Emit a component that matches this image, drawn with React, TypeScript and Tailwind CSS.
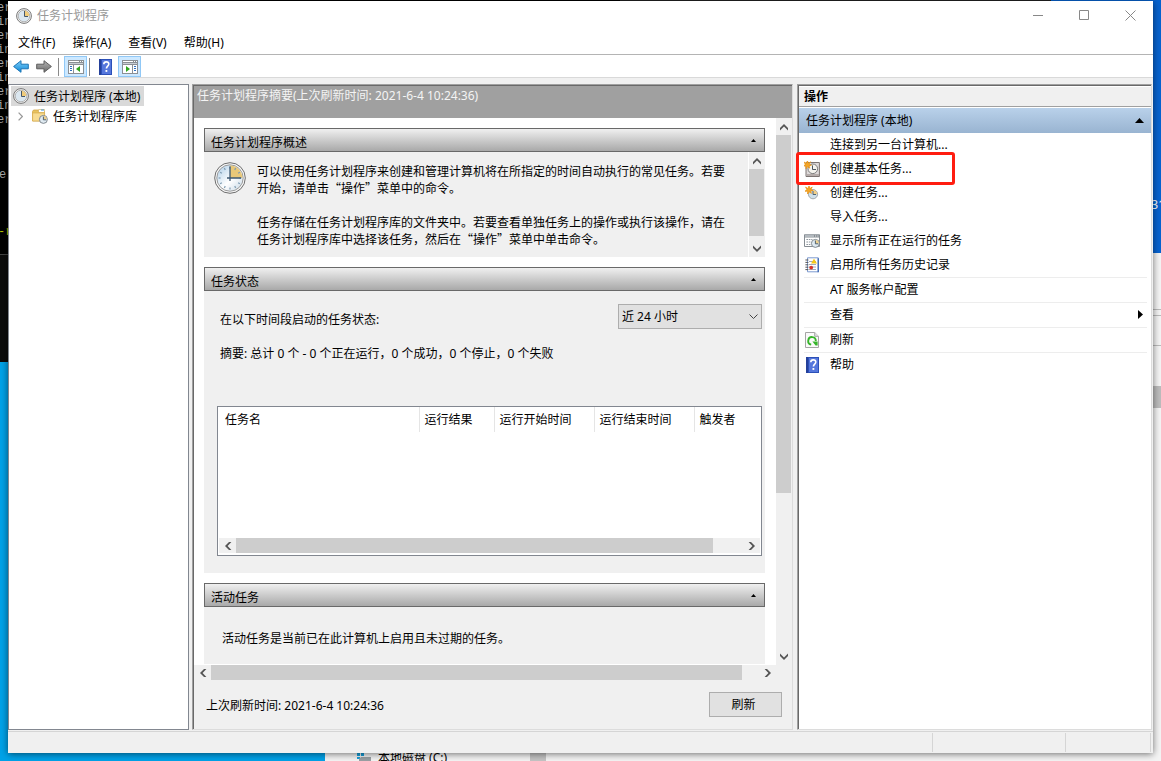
import { useId, type ReactNode } from 'react'

type IconProps = { className?: string }

function ClockIcon({ className = '' }: IconProps) {
  const id = useId()
  const ticks = Array.from({ length: 12 }, (_, i) => i * 30)
  return (
    <svg viewBox="0 0 32 32" className={`shrink-0 ${className}`} aria-hidden="true">
      <defs>
        <linearGradient id={id} x1="0" y1="0" x2="1" y2="1">
          <stop offset="0" stopColor="#a9cbe6" />
          <stop offset="0.55" stopColor="#ffffff" />
          <stop offset="1" stopColor="#c3d5e4" />
        </linearGradient>
      </defs>
      <circle cx="16" cy="16" r="15.3" fill="#f7f7f7" stroke="#6c6c6c" strokeWidth="1" />
      <circle cx="16" cy="16" r="13.2" fill={`url(#${id})`} stroke="#9b9b9b" strokeWidth="1" />
      <path d="M16 16V3.6A12.4 12.4 0 0 1 28.4 16Z" fill="#e9c878" />
      {ticks.map((a) => (
        <path key={a} d="M16 4.6v2" stroke="#7f9cb2" strokeWidth="1.2" transform={`rotate(${a} 16 16)`} />
      ))}
      <path d="M16 4.5V19M13 16H27" stroke="#3c5872" strokeWidth="1.3" fill="none" />
    </svg>
  )
}

function SmallClockIcon({ className = '' }: IconProps) {
  return (
    <svg viewBox="0 0 16 16" className={`shrink-0 ${className}`} aria-hidden="true">
      <circle cx="8" cy="8" r="7.4" fill="#f4f4f4" stroke="#777" />
      <circle cx="8" cy="8" r="5.8" fill="#dbe7f0" stroke="#a6a6a6" strokeWidth="0.8" />
      <path d="M8 8V2.6A5.4 5.4 0 0 1 13.4 8Z" fill="#f0cb7a" />
      <path d="M8.500 3V8.500H12" stroke="#46586a" fill="none" />
    </svg>
  )
}

function MiniClock({ x, y, r }: { x: number; y: number; r: number }) {
  return (
    <g>
      <circle cx={x} cy={y} r={r} fill="#dfeaf1" stroke="#777f86" strokeWidth="0.9" />
      <path d={`M${x} ${y}v${-r + 0.6}a${r - 0.6} ${r - 0.6} 0 0 1 ${r - 0.6} ${r - 0.6}z`} fill="#eed08c" />
      <path d={`M${x} ${y - r + 1.2}V${y + 0.4}H${x + r - 1.2}`} fill="none" stroke="#3f5566" strokeWidth="0.9" />
    </g>
  )
}

function Spark({ x, y }: { x: number; y: number }) {
  return (
    <path
      transform={`translate(${x} ${y})`}
      d="M0-4 1-1.4 3.2-3 1.8-.6 4 .4 1.6 1 2.4 3.4.2 1.8-1.4 4-1.4 1.2-4 1.2-2-.4-3.4-2.8-1-1.4Z"
      fill="#f5a623"
      stroke="#e8961a"
      strokeWidth="0.8"
    />
  )
}

function FolderClockIcon() {
  return (
    <svg viewBox="0 0 16 16" className="size-4 shrink-0" aria-hidden="true">
      <path d="M.5 3.5 1.5 2H6l1.2 1.5h5.3V13H.5Z" fill="#e8c25e" stroke="#d0a548" strokeWidth="0.8" />
      <path d="M6.5 1.5h6v3h-6z" fill="#fff" stroke="#d0a94a" strokeWidth="0.6" />
      <path d="M9 1.4h3v1.2H9z" fill="#5aa3dd" />
      <path d="M.6 5h12v8H.6z" fill="#f8dc92" stroke="#d5aa48" strokeWidth="0.6" />
      <MiniClock x={11.4} y={11.4} r={4} />
    </svg>
  )
}

function Arrow({ right = false }: { right?: boolean }) {
  const id = useId()
  const path = right ? 'M.7 5.2H8V1.7L15.4 7.5 8 13.3V9.8H.7Z' : 'M15.3 5.2H8V1.7L.6 7.5 8 13.3V9.8h7.3Z'
  return (
    <svg viewBox="0 0 16 15" className="h-[15px] w-4" aria-hidden="true">
      <defs>
        <linearGradient id={id} x1="0" y1="0" x2="0" y2="1">
          <stop offset="0" stopColor={right ? '#b5b5b5' : '#7fd0fa'} />
          <stop offset="1" stopColor={right ? '#6a6a6a' : '#0c86d6'} />
        </linearGradient>
      </defs>
      <path d={path} fill={`url(#${id})`} stroke={right ? '#5c5c5c' : '#1b74b5'} strokeWidth="1" />
    </svg>
  )
}

function PaneIcon({ flip = false }: { flip?: boolean }) {
  return (
    <svg viewBox="0 0 16 14" className="h-[14px] w-4" aria-hidden="true" shapeRendering="crispEdges">
      <path d="M0 0h16v14H0z" fill="#8b8f94" />
      <path d="M1 1h10v1H1zM12 1h1v1h-1zM14 1h1v1h-1z" fill="#fff" />
      <path d="M1 3h14v1H1z" fill="#c9ced4" />
      <path d="M1 5h14v8H1z" fill="#fff" />
      {flip ? (
        <>
          <path d="M10 5h1v8h-1z" fill="#8b8f94" />
          <path d="M12 6h2v1h-2zM12 8h2v1h-2zM12 10h2v1h-2z" fill="#2f6fc0" />
          <path d="M4 6v6l4-3z" fill="#2fa51c" shapeRendering="auto" />
        </>
      ) : (
        <>
          <path d="M5 5h1v8H5z" fill="#8b8f94" />
          <path d="M2 6h2v1H2zM2 8h2v1H2zM2 10h2v1H2z" fill="#2f6fc0" />
          <path d="M12 6v6L8 9z" fill="#2fa51c" shapeRendering="auto" />
        </>
      )}
    </svg>
  )
}

function HelpIcon() {
  return (
    <svg viewBox="0 0 13 16" className="h-4 w-[13px]" aria-hidden="true">
      <path d="M0 0h13v16H0z" fill="#2c50b8" />
      <path d="M3 1h9v14H3z" fill="#5577dc" />
      <path d="M0 0h2v16H0z" fill="#24409a" />
      <path
        d="M4.8 5.2C4.8 3.6 5.8 2.9 7.2 2.9s2.6.8 2.6 2.2c0 2-2.4 2-2.4 4.4"
        fill="none"
        stroke="#fff"
        strokeWidth="1.6"
      />
      <path d="M6.5 11h1.8v1.9H6.5z" fill="#fff" />
    </svg>
  )
}

function BasicTaskIcon() {
  return (
    <svg viewBox="0 0 16 16" className="size-4" aria-hidden="true">
      <path d="M2 1.5h13.4v14H2z" fill="#dedada" stroke="#7c7472" />
      <path d="M3 13h12v2H3z" fill="#b5acaa" />
      <circle cx="8.8" cy="7.8" r="4.8" fill="#f5f4ee" stroke="#7c7c7c" strokeWidth="1" />
      <path d="M8.500 4.4V8.500H12" fill="none" stroke="#4b5560" strokeWidth="1" />
      <Spark x={3.4} y={3.8} />
    </svg>
  )
}

function NewTaskIcon() {
  return (
    <svg viewBox="0 0 16 16" className="size-4" aria-hidden="true">
      <circle cx="9" cy="9.2" r="4.6" fill="#cfe0ea" stroke="#a3a9ac" strokeWidth="1" />
      <path d="M9 9.200V5A4.200 4.200 0 0 1 13.200 9.200Z" fill="#f3cf88" />
      <path d="M9 6V9.500H12" fill="none" stroke="#4f6475" />
      <Spark x={5} y={5} />
    </svg>
  )
}

function RunningIcon() {
  return (
    <svg viewBox="0 0 16 14" className="h-[14px] w-4" aria-hidden="true">
      <path d="M.5 1h15v11.5H.5z" fill="#fff" stroke="#858c92" />
      <path d="M0 .5h16v3H0z" fill="#858c92" />
      <path d="M1 2h9" stroke="#dfe5ea" />
      <path d="M11.2 2h1M13.4 2h1" stroke="#fff" />
      <path d="M2.4 5.5h6M2.4 8h5M2.4 10.5h4" stroke="#8e979e" strokeDasharray="1.6 .8" />
      <MiniClock x={11.4} y={9.4} r={4} />
    </svg>
  )
}

function HistoryIcon() {
  return (
    <svg viewBox="0 0 14 16" className="h-4 w-[14px]" aria-hidden="true">
      <path d="M2.5.8h10.8v14H2.5z" fill="#fff" stroke="#7d9bd0" />
      <path d="M12.6 1.2h1.2v14h-1.2z" fill="#3460ae" />
      <path d="M4 4.5h7M4 7.5h7M4 10h7M4 12.5h7" stroke="#8a95a6" strokeWidth="0.8" />
      <path d="M.4 3h3M.4 5.4h3M.4 7.8h3M.4 10.2h3M.4 12.6h3" stroke="#555" strokeWidth="1" />
      <path d="m9 1.8 3 4.8H6z" fill="#f6c915" />
      <circle cx="6.2" cy="10.6" r="1.9" fill="#d8362a" />
    </svg>
  )
}

function RefreshIcon() {
  return (
    <svg viewBox="0 0 14 16" className="h-4 w-[14px]" aria-hidden="true">
      <path d="M.5.5h9.2l3.8 3.8v11.2H.5z" fill="#fafafa" stroke="#a5a5a5" />
      <path d="M9.7.5v3.8h3.8" fill="#e4e4e4" stroke="#a5a5a5" />
      <path d="M6.200 12.600A3.800 3.800 0 1 1 10.800 9" fill="none" stroke="#36b52a" strokeWidth="1.900" />
      <path d="M7.400 9.400h5.200v4.200h-2z" fill="#36b52a" />
    </svg>
  )
}

const chevrons = {
  up: 'M0 5 4 1l4 4v2.400L4 3.600 0 7.400z',
  down: 'M0 3 4 7l4-4V.600L4 4.400 0 .600z',
  left: 'M5 0 1 4l4 4h2.400L3.600 4 7.400 0z',
  right: 'M3 0 7 4l-4 4H.600l3.800-4L.600 0z',
}

function ScrollArrow({ dir, className = '' }: { dir: keyof typeof chevrons; className?: string }) {
  return (
    <button type="button" aria-label={dir} className={`grid shrink-0 place-content-center ${className}`}>
      <svg viewBox="0 0 8 8" className="size-2" aria-hidden="true">
        <path d={chevrons[dir]} fill="#555" />
      </svg>
    </button>
  )
}

function Section({ title, className = '', children }: { title: string; className?: string; children: ReactNode }) {
  return (
    <section className={className}>
      <button
        type="button"
        className="flex h-6 w-full items-center justify-between border border-[#696969] bg-linear-to-b from-[#f0f0f0] to-[#a9a9a9] pt-1 pr-2 pl-1.5 text-left"
      >
        {title}
        <svg viewBox="0 0 5 3" className="mb-1 h-[3px] w-[5px]" aria-hidden="true">
          <path d="M0 3h5L2.5 0z" />
        </svg>
      </button>
      {children}
    </section>
  )
}

const menus = ['文件(F)', '操作(A)', '查看(V)', '帮助(H)']

const actions: { label: string; icon?: ReactNode }[] = [
  { label: '连接到另一台计算机...' },
  { label: '创建基本任务...', icon: <BasicTaskIcon /> },
  { label: '创建任务...', icon: <NewTaskIcon /> },
  { label: '导入任务...' },
  { label: '显示所有正在运行的任务', icon: <RunningIcon /> },
  { label: '启用所有任务历史记录', icon: <HistoryIcon /> },
]

const groups: { label: string; icon?: ReactNode; submenu?: boolean }[] = [
  { label: 'AT 服务帐户配置' },
  { label: '查看', submenu: true },
  { label: '刷新', icon: <RefreshIcon /> },
  { label: '帮助', icon: <HelpIcon /> },
]

function Desktop() {
  return (
    <div className="absolute inset-0 overflow-hidden bg-[#00a2e8]" aria-hidden="true">
      <div className="absolute top-0 right-0 h-[253px] w-1/2 bg-[#0763d0]" />
      <div className="absolute top-0 left-0 h-[362px] w-[620px] overflow-hidden bg-black pt-px font-['Liberation_Mono'] text-[12px] leading-[14px] text-[#a8a8a8]">
        <div className="-ml-[3px]">
          {['er', 'in', 'er', 'in', 'er', 'in', 'er', 'in', 'er'].map((t, i) => (
            <div key={i}>{t}</div>
          ))}
        </div>
        <div className="absolute top-[168px] left-[-1px]">e</div>
        <div className="absolute top-[225px] left-[-2px] text-[#b5c400]">-r</div>
        <div className="absolute top-[254px] h-[108px] w-full border-t border-[#444] bg-[#0c0c0c]" />
      </div>
      <div className="absolute top-0 right-[110px] left-[620px] h-px bg-[#222]" />
      <div className="absolute top-[196px] right-[-4px] text-[12px] text-white">31</div>
      <div className="absolute top-[253px] right-0 bottom-0 left-[325px] bg-[#f4f4f4]">
        <div className="absolute top-[56px] right-0 h-[7px] w-2 border-y border-[#bbb]" />
        <div className="absolute top-[92px] right-0 h-px w-2 bg-[#bbb]" />
        <div className="absolute top-[133px] right-0 h-[22px] w-2 bg-[#bcbcbc]" />
        <div className="absolute bottom-[-5px] left-[32px] flex items-center gap-[7px] text-[12px] leading-4 text-black">
          <svg viewBox="0 0 14 10" className="h-[10px] w-[14px]">
            <path d="M0 0h3v3H0zM4 0h3v3H4zM0 4h3v2H0z" fill="#18a0dc" />
            <path d="M2 6 4 4h10v6H2z" fill="#9aa0a4" />
          </svg>
          本地磁盘 (C:)
        </div>
        <div className="absolute bottom-0 left-[205px] h-2 w-4 bg-[#c4c4c4]" />
      </div>
    </div>
  )
}

export default function App() {
  return (
    <div className="relative flex h-screen min-h-[560px] min-w-[900px] flex-col overflow-hidden px-2 pt-px pb-2 font-['Noto_Sans','Noto_Sans_CJK_SC',sans-serif] text-[12px] leading-[17px] text-black">
      <Desktop />
      <div className="relative flex min-h-0 flex-1 flex-col bg-[#f0f0f0] shadow-[0_1px_7px_rgba(0,0,0,0.55)]">
        <header className="flex h-[29px] shrink-0 items-center bg-white pl-2 text-[#999]">
          <SmallClockIcon className="size-4" />
          <h1 className="ml-[5px]">任务计划程序</h1>
          <div className="ml-auto flex text-[#888]">
            <button type="button" aria-label="最小化" className="grid h-7 w-[46px] place-items-center">
              <svg viewBox="0 0 11 11" className="size-[11px]" shapeRendering="crispEdges"><path d="M0 5.5h10" stroke="currentColor" /></svg>
            </button>
            <button type="button" aria-label="最大化" className="grid h-7 w-[46px] place-items-center">
              <svg viewBox="0 0 11 11" className="size-[11px]"><path d="M.5.5h9v9h-9z" fill="none" stroke="currentColor" /></svg>
            </button>
            <button type="button" aria-label="关闭" className="grid h-7 w-[46px] place-items-center">
              <svg viewBox="0 0 11 11" className="size-[11px]"><path d="m.5.5 10 10m0-10-10 10" stroke="currentColor" /></svg>
            </button>
          </div>
        </header>

        <nav className="flex h-[25px] shrink-0 items-center gap-[17px] border-b border-[#b4b4b4] bg-white pl-2.5">
          {menus.map((m) => (
            <button key={m} type="button">{m}</button>
          ))}
        </nav>

        <div className="flex h-[23px] shrink-0 items-center border-b border-[#d9d9d9] bg-white pt-px pl-1">
          <button type="button" aria-label="后退" className="px-px"><Arrow /></button>
          <button type="button" aria-label="前进" className="ml-[5px] px-px"><Arrow right /></button>
          <span className="ml-[5px] h-[18px] w-px bg-[#8a8a8a]" />
          <button type="button" aria-label="显示/隐藏控制台树" className="ml-[5px] grid h-[21px] w-[23px] place-items-center border border-[#90c8f6] bg-[#cce8ff]">
            <PaneIcon />
          </button>
          <span className="ml-[2px] h-[18px] w-px bg-[#8a8a8a]" />
          <button type="button" aria-label="帮助" className="ml-[9px]"><HelpIcon /></button>
          <button type="button" aria-label="显示/隐藏操作窗格" className="ml-1.5 grid h-[21px] w-[23px] place-items-center border border-[#90c8f6] bg-[#cce8ff]">
            <PaneIcon flip />
          </button>
        </div>

        <main className="flex min-h-0 flex-1 pt-1.5">
          <aside className="mr-[3px] w-[181px] shrink-0 border border-[#828790] bg-white pt-px pl-0.5">
            <ul>
              <li>
                <button type="button" className="flex h-5 items-center gap-[5px] bg-[#d9d9d9] pr-1 pl-0.5">
                  <SmallClockIcon className="size-4" />
                  任务计划程序 (本地)
                </button>
              </li>
              <li>
                <button type="button" className="flex h-5 items-center pl-[7px]">
                  <svg viewBox="0 0 5 9" className="h-[9px] w-[5px]" aria-hidden="true">
                    <path d="m.6.6 3.8 3.9L.6 8.4" fill="none" stroke="#999" strokeWidth="1.3" />
                  </svg>
                  <span className="ml-[9px] flex items-center gap-[5px]"><FolderClockIcon />任务计划程序库</span>
                </button>
              </li>
            </ul>
          </aside>

          <div className="mr-1 flex min-w-0 flex-1 flex-col border-t border-r border-b border-l border-t-[#a0a0a0] border-r-[#dcdcdc] border-b-[#dcdcdc] border-l-[#a0a0a0]">
            <div className="flex min-h-0 flex-1 flex-col border-t border-l border-[#696969]">
              <h2 className="h-8 shrink-0 bg-[#a0a0a0] pt-px pl-[3px] text-[#f4f4f4]">任务计划程序摘要(上次刷新时间: 2021-6-4 10:24:36)</h2>
              <div className="flex min-h-0 flex-1">
                <div className="min-w-0 flex-1 overflow-hidden border-b border-white bg-white pt-2.5 pr-[11px] pl-2.5">
                  <Section title="任务计划程序概述">
                    <div className="flex h-[105px] bg-[#f0f0f0]">
                      <ClockIcon className="mt-2.5 ml-2.5 size-8" />
                      <div className="mt-2.5 ml-[11px] w-[472px] font-['Noto_Sans_CJK_SC',sans-serif]">
                        <p>可以使用任务计划程序来创建和管理计算机将在所指定的时间自动执行的常见任务。若要开始，请单击“操作”菜单中的命令。</p>
                        <p className="mt-[17px]">任务存储在任务计划程序库的文件夹中。若要查看单独任务上的操作或执行该操作，请在任务计划程序库中选择该任务，然后在“操作”菜单中单击命令。</p>
                      </div>
                      <div className="ml-auto flex w-[17px] shrink-0 flex-col border-r border-l border-r-[#f0f0f0] border-l-white">
                        <ScrollArrow dir="up" className="h-[17px]" />
                        <div className="h-[67px] bg-[#cdcdcd]" />
                        <ScrollArrow dir="down" className="mt-auto h-[17px]" />
                      </div>
                    </div>
                  </Section>

                  <Section title="任务状态" className="mt-2.5">
                    <div className="bg-[#f0f0f0] pt-[13px] pr-[3px] pb-[17px] pl-[13px]">
                      <div className="flex justify-between pl-[3px]">
                        <label htmlFor="period" className="mt-[7px]">在以下时间段启动的任务状态:</label>
                        <span className="relative flex">
                          <select id="period" className="h-[25px] w-36 appearance-none border border-[#adadad] bg-[#e1e1e1] pl-[3px]">
                            <option>近 24 小时</option>
                          </select>
                          <svg viewBox="0 0 9 5" className="pointer-events-none absolute top-2.5 right-1 h-[5px] w-[9px]" aria-hidden="true">
                            <path d="m.5.5 4 4 4-4" fill="none" stroke="#444" />
                          </svg>
                        </span>
                      </div>
                      <p className="mt-4 pl-[3px]">摘要: 总计 0 个 - 0 个正在运行，0 个成功，0 个停止，0 个失败</p>
                      <div className="mt-11 flex h-[150px] flex-col border border-[#828790] bg-white px-px pb-0.5">
                        <table className="w-full table-fixed text-left">
                          <thead>
                            <tr className="h-[25px]">
                              <th className="w-[200px] border-r border-[#e5e5e5] pl-1.5 font-normal">任务名</th>
                              <th className="w-[75px] border-r border-[#e5e5e5] pl-[5px] font-normal">运行结果</th>
                              <th className="w-[100px] border-r border-[#e5e5e5] pl-[5px] font-normal">运行开始时间</th>
                              <th className="w-[100px] border-r border-[#e5e5e5] pl-[5px] font-normal">运行结束时间</th>
                              <th className="pl-[5px] font-normal">触发者</th>
                            </tr>
                          </thead>
                        </table>
                        <div className="mt-auto flex h-[15px] bg-[#f0f0f0]">
                          <ScrollArrow dir="left" className="w-[17px]" />
                          <div className="mr-[30px] flex-1 bg-[#cdcdcd]" />
                          <ScrollArrow dir="right" className="w-[17px]" />
                        </div>
                      </div>
                    </div>
                  </Section>

                  <Section title="活动任务" className="mt-2.5">
                    <div className="h-[100px] bg-[#f0f0f0] pt-[23px] pl-[18px]">活动任务是当前已在此计算机上启用且未过期的任务。</div>
                  </Section>
                </div>
                <div className="flex w-4 shrink-0 flex-col pr-px">
                  <ScrollArrow dir="up" className="h-[17px]" />
                  <div className="h-[358px] bg-[#cdcdcd]" />
                  <ScrollArrow dir="down" className="mt-auto h-[17px]" />
                </div>
              </div>
              <div className="mr-4 flex h-[15px] shrink-0">
                <ScrollArrow dir="left" className="w-[17px]" />
                <div className="mr-[17px] flex-1 bg-[#cdcdcd]" />
                <ScrollArrow dir="right" className="w-[17px]" />
              </div>
              <div className="flex h-[49px] shrink-0 items-center justify-between pr-2.5 pl-3">
                <span className="pt-0.5">上次刷新时间: 2021-6-4 10:24:36</span>
                <button type="button" className="h-[25px] w-[73px] border border-[#adadad] bg-[#e1e1e1] pr-1">刷新</button>
              </div>
            </div>
          </div>

          <aside className="mr-px flex w-[355px] shrink-0 flex-col border border-t-[#a0a0a0] border-r-[#dcdcdc] border-b-[#dcdcdc] border-l-[#a0a0a0]">
            <div className="flex-1 border-t border-l border-[#696969] bg-white">
              <h2 className="mt-px h-5 border-b border-[#a0a0a0] bg-[#f0f0f0] pl-[5px] leading-5 font-bold">操作</h2>
              <div className="mt-px flex h-[25px] items-center justify-between bg-linear-to-b from-[#b9d1ea] to-[#99b4d1] pr-[7px] pl-[7px]">
                任务计划程序 (本地)
                <svg viewBox="0 0 9 5" className="h-[5px] w-[9px]" aria-hidden="true"><path d="M0 5h9L4.5 0z" /></svg>
              </div>
              <ul>
                {actions.map((a, i) => (
                  <li key={a.label} className="relative">
                    <button type="button" className="flex h-6 w-full items-center pb-px text-left">
                      <span className="grid w-[31px] shrink-0 place-items-center pr-[5px]">{a.icon}</span>
                      {a.label}
                    </button>
                    {i === 1 && <span className="pointer-events-none absolute -top-[5px] -left-[3px] h-[33px] w-[159px] rounded-[3px] border-3 border-[#ff1d10]" />}
                  </li>
                ))}
              </ul>
              <ul className="mr-1 ml-[5px]">
                {groups.map((g) => (
                  <li key={g.label}>
                    <button type="button" className="flex h-[25px] w-full items-center border-t border-[#ededed] pb-px text-left">
                      <span className="grid w-[26px] shrink-0 place-items-center pr-2.5">{g.icon}</span>
                      {g.label}
                      {g.submenu && (
                        <svg viewBox="0 0 5 9" className="mr-1 ml-auto h-[9px] w-[5px]" aria-hidden="true"><path d="M0 0v9l5-4.5z" /></svg>
                      )}
                    </button>
                  </li>
                ))}
              </ul>
            </div>
          </aside>
        </main>

        <footer className="mt-px flex h-[22px] shrink-0 items-stretch border-t border-[#d5d5d5] py-px pr-0.5">
          <span className="flex-1 border-r border-[#d5d5d5]" />
          <span className="w-[133px] border-r border-[#d5d5d5]" />
          <span className="w-[85px] border-r border-[#d5d5d5]" />
        </footer>
      </div>
    </div>
  )
}
